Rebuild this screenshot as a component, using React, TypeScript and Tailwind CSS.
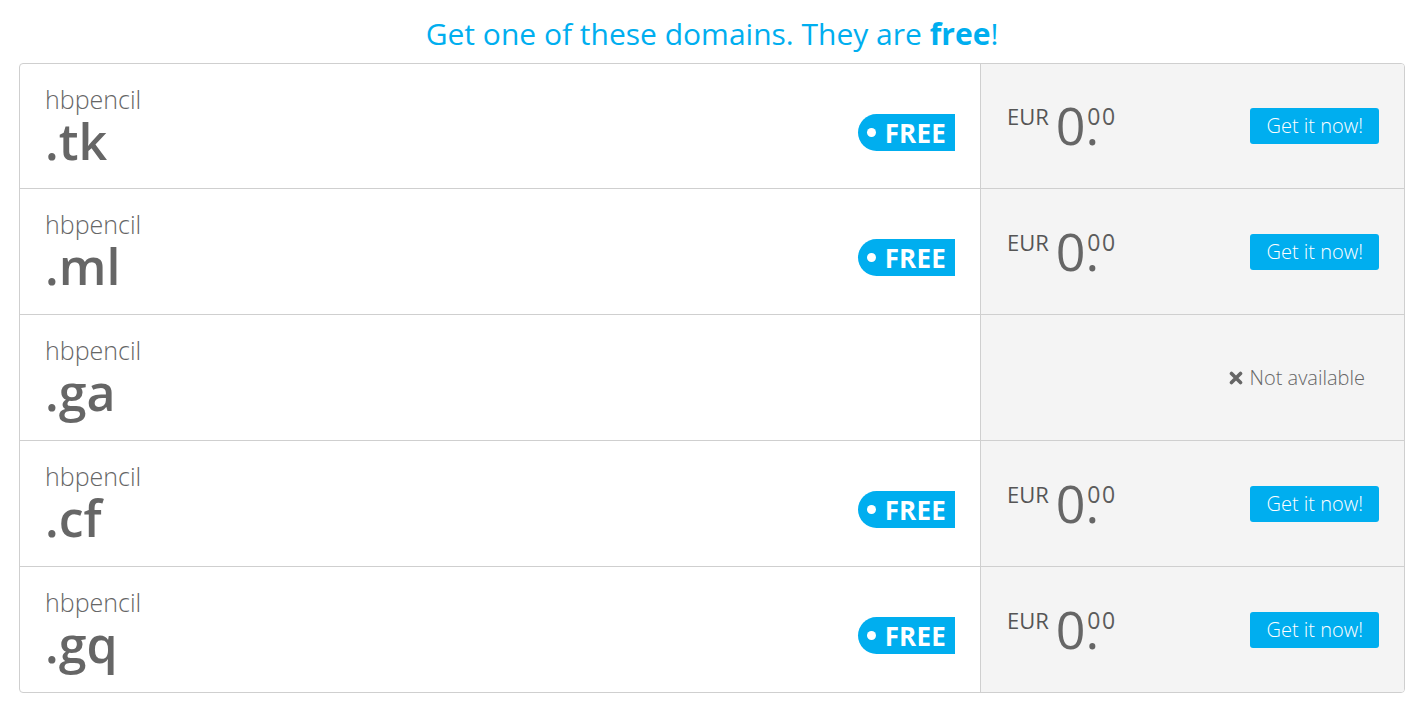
type Domain = {
  name: string;
  tld: string;
  available: boolean;
};

const domains: Domain[] = [
  { name: 'hbpencil', tld: '.tk', available: true },
  { name: 'hbpencil', tld: '.ml', available: true },
  { name: 'hbpencil', tld: '.ga', available: false },
  { name: 'hbpencil', tld: '.cf', available: true },
  { name: 'hbpencil', tld: '.gq', available: true },
];

const FreeBadge = () => (
  <div className="flex items-center h-[37px] pl-[9px] pr-[9px] bg-[#00aeef] rounded-l-full rounded-r-[3px] text-white">
    <span className="w-[9px] h-[9px] rounded-full bg-white mr-[9px]"></span>
    <span className="text-[26px] font-bold leading-none tracking-[0.2px]">FREE</span>
  </div>
);

// big zero with the cents raised over the dot
const Price = () => (
  <div className="flex items-start text-[#666]">
    <span className="text-[22px] font-normal leading-none mt-[4px] mr-[7px] text-[#555]">EUR</span>
    <span className="text-[52px] font-normal leading-none mt-[-2px]">0.</span>
    <span className="text-[23px] font-normal leading-none mt-[4px] ml-[-12px] tracking-[1.5px] text-[#5c5c5c]">00</span>
  </div>
);

const TimesIcon = () => (
  <svg width="14" height="14" viewBox="0 0 14 14" className="mr-[7px]">
    <path d="M2.5 2.5 L11.5 11.5 M11.5 2.5 L2.5 11.5" stroke="#666" strokeWidth="3.6" strokeLinecap="round" />
  </svg>
);

const rowHeight = (i: number, count: number) => {
  if (i === 0) return 'h-[125px] border-b border-[#cfcfcf]';
  if (i === count - 1) return 'h-[125px]';
  return 'h-[126px] border-b border-[#cfcfcf]';
};

const DomainRow = ({ domain, className }: { domain: Domain; className: string }) => (
  <div className={`grid grid-cols-[961px_1fr] ${className}`}>
    <div className="flex items-start justify-between pl-[25px] pr-[25px] border-r border-[#cfcfcf]">
      <div className="flex flex-col text-[#666] pt-[20px]">
        <span className="text-[25px] font-light leading-[31px]">{domain.name}</span>
        <span className="text-[50px] font-semibold leading-[52px]">{domain.tld}</span>
      </div>
      {domain.available && (
        <div className="mt-[50px]">
          <FreeBadge />
        </div>
      )}
    </div>
    <div className="flex items-center justify-between bg-[#f4f4f4] pl-[26px] pr-[25px]">
      {domain.available ? (
        <>
          <Price />
          <button className="h-[36px] px-[16px] bg-[#00aeef] text-white text-[20px] font-light leading-none rounded-[3px]">
            Get it now!
          </button>
        </>
      ) : (
        <div className="ml-auto mr-[14px] flex items-center text-[#666] text-[20px] font-light">
          <TimesIcon />
          Not available
        </div>
      )}
    </div>
  </div>
);

export default function App() {
  return (
    <div className="bg-white min-h-screen font-['Open_Sans',sans-serif]">
      <h1 className="h-[63px] pt-[14px] text-center text-[30px] leading-[40px] font-normal text-[#00aeef]">
        Get one of these domains. They are <span className="font-bold">free</span>!
      </h1>
      <div className="mx-[19px] border border-[#cfcfcf] rounded-[4px] overflow-hidden">
        {domains.map((d, i) => (
          <DomainRow key={d.tld} domain={d} className={rowHeight(i, domains.length)} />
        ))}
      </div>
    </div>
  );
}
